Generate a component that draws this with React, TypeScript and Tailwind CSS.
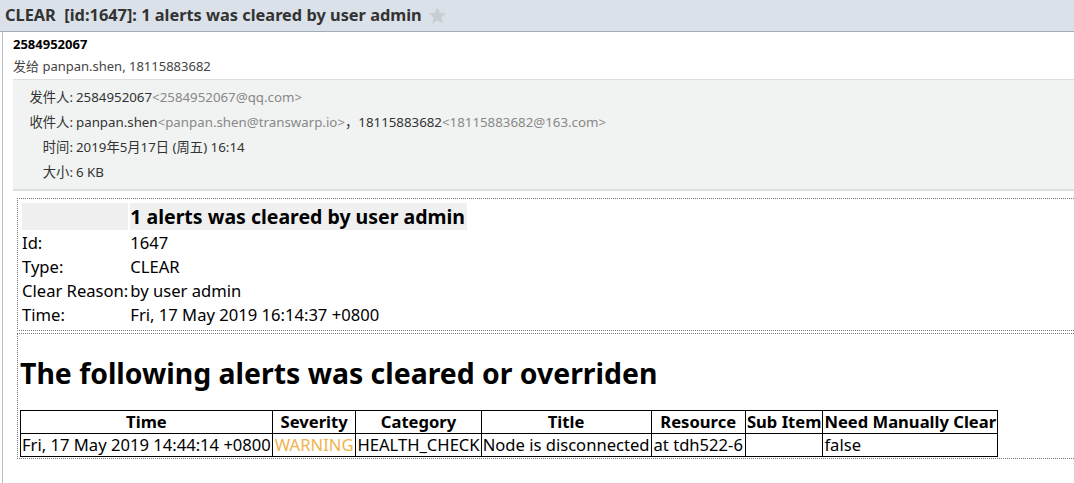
import React from "react";

const cjk = { fontFamily: '"Noto Sans", "Noto Sans CJK SC", sans-serif' };

export default function App() {
  const headers = ["Time", "Severity", "Category", "Title", "Resource", "Sub Item", "Need Manually Clear"];
  return (
    <div className="w-[1074px] h-[483px] bg-white overflow-hidden text-[#333]" style={cjk}>
      <div className="h-[32px] bg-[#dbe1e8] border-b border-[#a3adb5] flex items-center pl-[5px]">
        <span className="font-bold text-[16.35px] text-[#333] whitespace-pre">CLEAR  [id:1647]: 1 alerts was cleared by user admin</span>
        <svg className="ml-[6px]" width="19" height="19" viewBox="0 0 24 24">
          <path d="M12 1.5l3.1 7.1 7.7.7-5.8 5.1 1.7 7.6L12 18l-6.7 4 1.7-7.6-5.8-5.1 7.7-.7z" fill="#c9ced3" />
        </svg>
      </div>
      <div className="ml-[2px] border-l border-[#b8bec4] h-[451px]">
        <div className="pl-[10px] pt-[1px]">
          <div className="font-bold text-[13px] text-black leading-[22px]">2584952067</div>
          <div className="text-[13px] text-[#444] leading-[22px]">发给 panpan.shen, 18115883682</div>
        </div>
        <div className="ml-[10px] mt-[2px] bg-[#f0f3f2] border-t border-[#dcdfe0] border-b-2 border-b-[#dcdfe0] pt-[5px] pb-[4px] text-[13.3px] text-[#333]">
          <div className="flex leading-[25px]"><span className="w-[60px] text-right">发件人:</span><span className="ml-[3px]">2584952067<span className="text-[#888]">&lt;2584952067@qq.com&gt;</span></span></div>
          <div className="flex leading-[25px]"><span className="w-[60px] text-right">收件人:</span><span className="ml-[3px]">panpan.shen<span className="text-[#888]">&lt;panpan.shen@transwarp.io&gt;</span>，18115883682<span className="text-[#888]">&lt;18115883682@163.com&gt;</span></span></div>
          <div className="flex leading-[25px]"><span className="w-[60px] text-right">时间:</span><span className="ml-[3px]">2019年5月17日 (周五) 16:14</span></div>
          <div className="flex leading-[25px]"><span className="w-[60px] text-right">大小:</span><span className="ml-[3px]">6 KB</span></div>
        </div>
        <div className="ml-[14px] mt-[7px] text-black text-[16.6px]">
          <div className="border-t border-l border-b border-dotted border-[#777] pl-[2px] pt-[2px] pb-[2px]">
            <table className="border-separate border-spacing-[2px] leading-[22px]">
              <tbody>
                <tr>
                  <td className="bg-[#f0f0f0] w-[106px] h-[27px]"></td>
                  <td className="bg-[#f0f0f0] font-bold text-[19.5px] leading-[27px] pr-[2px]">1 alerts was cleared by user admin</td>
                </tr>
                <tr><td>Id:</td><td>1647</td></tr>
                <tr><td>Type:</td><td>CLEAR</td></tr>
                <tr><td className="whitespace-nowrap">Clear Reason:</td><td>by user admin</td></tr>
                <tr><td>Time:</td><td>Fri, 17 May 2019 16:14:37 +0800</td></tr>
              </tbody>
            </table>
          </div>
          <div className="border-t border-l border-b border-dotted border-[#777] mt-[2px] pl-[2px] pb-[1px]">
            <h1 className="font-bold text-[28.4px] leading-[36px] mt-[21px] mb-[19px]">The following alerts was cleared or overriden</h1>
            <table className="border-collapse border border-black leading-[22px]">
              <thead>
                <tr>
                  {headers.map((h) => (
                    <th key={h} className="border border-black font-bold px-[1px] whitespace-nowrap">{h}</th>
                  ))}
                </tr>
              </thead>
              <tbody>
                <tr>
                  <td className="border border-black px-[1px] whitespace-nowrap">Fri, 17 May 2019 14:44:14 +0800</td>
                  <td className="border border-black px-[2px] text-[#f0b44c]">WARNING</td>
                  <td className="border border-black px-[1px]">HEALTH_CHECK</td>
                  <td className="border border-black px-[1px] whitespace-nowrap">Node is disconnected</td>
                  <td className="border border-black px-[2px] whitespace-nowrap">at tdh522-6</td>
                  <td className="border border-black px-[1px]"></td>
                  <td className="border border-black px-[1px]">false</td>
                </tr>
              </tbody>
            </table>
          </div>
        </div>
      </div>
    </div>
  );
}
